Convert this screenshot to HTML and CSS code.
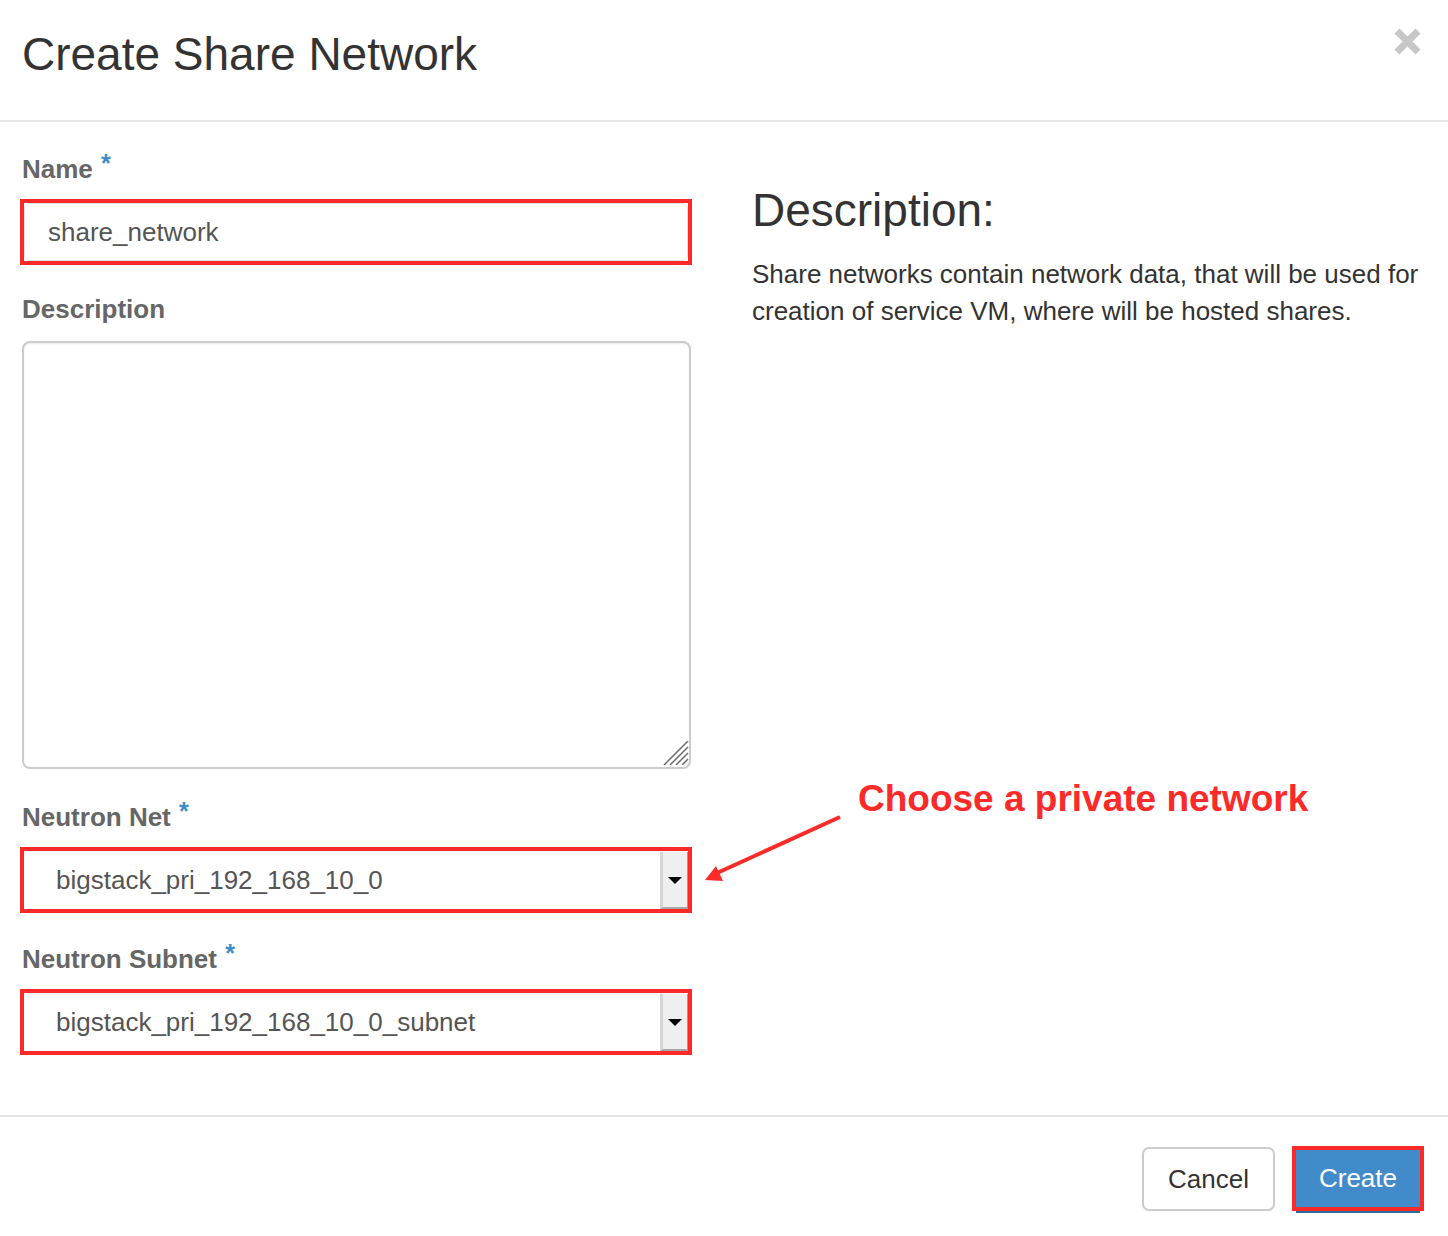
FILE: index.html
```html
<!DOCTYPE html>
<html lang="en">
<head>
    <meta charset="UTF-8">
    <meta name="viewport" content="width=device-width, initial-scale=1.0">
    <title>Create Share Network</title>
    <link rel="stylesheet" href="styles.css">
</head>
<body>
    <div class="modal">
        <div class="modal-header">
            <h3 class="modal-title">Create Share Network</h3>
            <button class="close" type="button" aria-label="Close">
                <svg width="29" height="27" viewBox="0 0 29 27">
                    <path d="M4 3 L25 24 M25 3 L4 24" stroke="#c6c6c6" stroke-width="7"/>
                </svg>
            </button>
        </div>

        <div class="modal-body">
            <div class="form-col">
                <div class="form-group">
                    <label class="control-label">Name <span class="req">*</span></label>
                    <div class="mark">
                        <input class="form-control" type="text" value="share_network">
                    </div>
                </div>

                <div class="form-group wide-gap">
                    <label class="control-label">Description</label>
                    <div class="textarea-wrap">
                        <textarea class="textarea"></textarea>
                        <svg class="grip" width="26" height="24" viewBox="0 0 26 24">
                            <path d="M1 24 L25 0 M7 24 L25 6 M13 24 L25 12 M19 24 L25 18" stroke="#6f6f6f" stroke-width="1.5"/>
                        </svg>
                    </div>
                </div>

                <div class="form-group wide-gap">
                    <label class="control-label">Neutron Net <span class="req">*</span></label>
                    <div class="mark">
                        <div class="select">
                            <span class="select-value">bigstack_pri_192_168_10_0</span>
                            <span class="select-btn"><i class="caret"></i></span>
                        </div>
                    </div>
                </div>

                <div class="form-group">
                    <label class="control-label">Neutron Subnet <span class="req">*</span></label>
                    <div class="mark">
                        <div class="select">
                            <span class="select-value">bigstack_pri_192_168_10_0_subnet</span>
                            <span class="select-btn"><i class="caret"></i></span>
                        </div>
                    </div>
                </div>
            </div>

            <div class="info-col">
                <h3>Description:</h3>
                <p>Share networks contain network data, that will be used for creation of service VM, where will be hosted shares.</p>
            </div>

            <!-- hint drawn over the form -->
            <div class="callout">Choose a private network</div>
            <svg class="callout-arrow" width="150" height="80" viewBox="0 0 150 80">
                <path d="M140 7 L17 63" stroke="#fd2a2a" stroke-width="4"/>
                <polygon points="5,70 16,56 23,71" fill="#fd2a2a"/>
            </svg>
        </div>

        <div class="modal-footer">
            <button class="btn" type="button">Cancel</button>
            <span class="mark-btn"><button class="btn btn-primary" type="button">Create</button></span>
        </div>
    </div>
</body>
</html>
```

FILE: styles.css
```css
* {
    margin: 0;
    padding: 0;
    box-sizing: border-box;
}

body {
    font-family: "Liberation Sans", Arial, sans-serif;
    color: #333;
    background: #fff;
}

.modal {
    width: 1448px;
    height: 1236px;
}

/* header */
.modal-header {
    display: flex;
    justify-content: space-between;
    align-items: flex-start;
    padding: 29px 26px 40px 22px;
    border-bottom: 2px solid #e5e5e5;
}

.modal-title {
    font-size: 46px;
    font-weight: normal;
    line-height: 51px;
    color: #333;
}

.close {
    border: none;
    background: none;
    margin-top: -1px;
    cursor: pointer;
}

.close svg {
    display: block;
}

/* body */
.modal-body {
    position: relative;
    display: flex;
    padding: 29px 20px 62px 22px;
}

.form-col {
    width: 669px;
}

.form-group {
    margin-bottom: 28px;
}

.form-group.wide-gap {
    margin-bottom: 30px;
}

.form-group:last-child {
    margin-bottom: 0;
}

.control-label {
    display: block;
    font-size: 26px;
    font-weight: bold;
    line-height: 36px;
    color: #666;
    margin-bottom: 14px;
}

.req {
    position: relative;
    top: -6px;
    margin-left: 1px;
    font-size: 25px;
    color: #428bca;
}

.mark {
    border: 4px solid #fd2a2a;
    margin: -2px -1px -2px -2px;
}

.form-control {
    display: block;
    width: 100%;
    height: 58px;
    padding: 0 23px;
    font-family: "Liberation Sans", Arial, sans-serif;
    font-size: 26px;
    color: #555;
    background: #fff;
    border: 1px solid #e4e4e4;
    border-radius: 6px;
    outline: none;
}

.textarea-wrap {
    position: relative;
}

.textarea {
    display: block;
    width: 100%;
    height: 428px;
    padding: 12px 23px;
    font-family: "Liberation Sans", Arial, sans-serif;
    font-size: 26px;
    color: #555;
    border: 2px solid #ccc;
    border-radius: 8px;
    box-shadow: inset 0 1px 2px rgba(0, 0, 0, 0.08);
    resize: none;
    outline: none;
}

.grip {
    position: absolute;
    right: 2px;
    bottom: 4px;
}

.select {
    display: flex;
    height: 58px;
    background: linear-gradient(#f4f4f4, #fff 6px);
}

.select-value {
    flex: 1;
    padding-left: 32px;
    line-height: 58px;
    font-size: 26px;
    color: #555;
}

.select-btn {
    display: flex;
    align-items: center;
    justify-content: center;
    width: 28px;
    margin-top: 1px;
    background: #efefef;
    border-left: 3px solid #d6d6d6;
    border-right: 1px solid #9c9c9c;
    border-bottom: 2px solid #a8a8a8;
}

.caret {
    width: 0;
    height: 0;
    margin-top: 2px;
    border-left: 7px solid transparent;
    border-right: 7px solid transparent;
    border-top: 7px solid #000;
}

.info-col {
    flex: 1;
    margin-left: 61px;
}

.info-col h3 {
    margin-top: 34px;
    font-size: 46px;
    font-weight: normal;
    line-height: 51px;
    color: #333;
}

.info-col p {
    margin-top: 20px;
    font-size: 26px;
    line-height: 37px;
    color: #333;
}

.callout {
    position: absolute;
    left: 858px;
    top: 658px;
    font-size: 37px;
    font-weight: bold;
    line-height: 37px;
    color: #fd2a2a;
    white-space: nowrap;
}

.callout-arrow {
    position: absolute;
    left: 700px;
    top: 688px;
}

/* footer */
.modal-footer {
    display: flex;
    justify-content: flex-end;
    align-items: flex-start;
    padding: 30px 24px 0 0;
    border-top: 2px solid #e5e5e5;
}

.btn {
    height: 64px;
    padding: 0 24px;
    font-family: "Liberation Sans", Arial, sans-serif;
    font-size: 26px;
    color: #333;
    background: #fff;
    border: 2px solid #ccc;
    border-radius: 7px;
    cursor: pointer;
}

.mark-btn {
    display: block;
    margin: -1px 0 0 17px;
    border: 4px solid #fd2a2a;
    box-shadow: 0 6px 0 -4px #2d6ca2;
}

.btn-primary {
    display: block;
    width: 124px;
    height: 57px;
    padding: 0;
    color: #fff;
    background: #428bca;
    border: none;
    border-radius: 0;
}
```
